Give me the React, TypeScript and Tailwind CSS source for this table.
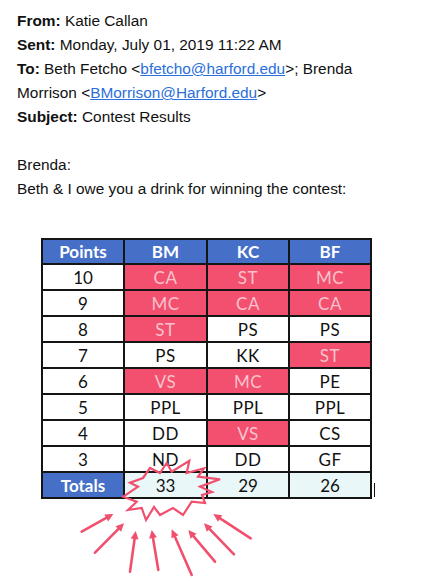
import React from 'react';

type Cell = { t: string; red?: boolean };

const rows: { pts: string; cells: Cell[] }[] = [
  { pts: '10', cells: [{ t: 'CA', red: true }, { t: 'ST', red: true }, { t: 'MC', red: true }] },
  { pts: '9', cells: [{ t: 'MC', red: true }, { t: 'CA', red: true }, { t: 'CA', red: true }] },
  { pts: '8', cells: [{ t: 'ST', red: true }, { t: 'PS' }, { t: 'PS' }] },
  { pts: '7', cells: [{ t: 'PS' }, { t: 'KK' }, { t: 'ST', red: true }] },
  { pts: '6', cells: [{ t: 'VS', red: true }, { t: 'MC', red: true }, { t: 'PE' }] },
  { pts: '5', cells: [{ t: 'PPL' }, { t: 'PPL' }, { t: 'PPL' }] },
  { pts: '4', cells: [{ t: 'DD' }, { t: 'VS', red: true }, { t: 'CS' }] },
  { pts: '3', cells: [{ t: 'ND' }, { t: 'DD' }, { t: 'GF' }] },
];

const arrows = [
  [81.7, 531.7, 113.3, 514],
  [95, 552.7, 124, 523.3],
  [130, 571.7, 135.7, 531],
  [158.3, 570, 151.7, 530],
  [191.7, 575, 171.7, 529.3],
  [215, 561.7, 188.3, 530],
  [234, 554.3, 204, 523.3],
  [250.7, 538.3, 213.3, 514],
];

const star =
  '123.3,496.7 138,486.7 130,482.7 143,478 150,468 160,473 166.7,463 171.7,471.7 189.3,460.7 186.7,473 204,468.3 198,476.7 220,479.3 200,486.7 212,492 202,495 205,503 191.7,501.7 183,515 173,508 160,515 154,507 146,520 141.7,508 128,510 136.7,501.7';

function Arrow({ a }: { a: number[] }) {
  const [x1, y1, x2, y2] = a;
  const ang = Math.atan2(y2 - y1, x2 - x1);
  const len = 9;
  const spread = 0.45;
  const p1 = [x2 - len * Math.cos(ang - spread), y2 - len * Math.sin(ang - spread)];
  const p2 = [x2 - len * Math.cos(ang + spread), y2 - len * Math.sin(ang + spread)];
  return (
    <g>
      <line x1={x1} y1={y1} x2={x2 - 4 * Math.cos(ang)} y2={y2 - 4 * Math.sin(ang)} stroke="#f0506e" strokeWidth="2.6" strokeLinecap="round" />
      <polygon points={`${x2},${y2} ${p1[0]},${p1[1]} ${p2[0]},${p2[1]}`} fill="#f0506e" />
    </g>
  );
}

export default function App() {
  const cellBase = 'flex items-center justify-center h-[24px] text-[17px] leading-none';

  return (
    <div className="relative w-[441px] h-[581px] bg-white overflow-hidden text-[#111]">
      {/* Email header */}
      <div className="pt-[9px] pl-[17px] text-[15.4px] leading-[24px] font-['Liberation_Sans',Arial,sans-serif]">
        <div><b>From:</b> Katie Callan</div>
        <div><b>Sent:</b> Monday, July 01, 2019 11:22 AM</div>
        <div>
          <b>To:</b> Beth Fetcho &lt;<span className="text-[#2a6fdb] underline">bfetcho@harford.edu</span>&gt;; Brenda
        </div>
        <div>
          Morrison &lt;<span className="text-[#2a6fdb] underline">BMorrison@Harford.edu</span>&gt;
        </div>
        <div><b>Subject:</b> Contest Results</div>
        <div className="h-[24px]" />
        <div>Brenda:</div>
        <div>Beth &amp; I owe you a drink for winning the contest:</div>
      </div>

      {/* Results table */}
      <div className="mt-[37px] ml-[41px] w-[331px] grid grid-cols-[80px_81px_80px_80px] gap-[2px] p-[2px] bg-[#151515] font-['Lato','Open_Sans',sans-serif]">
        {['Points', 'BM', 'KC', 'BF'].map((h) => (
          <div key={h} className="flex items-center justify-center h-[23px] bg-[#4670c8] text-white font-bold text-[17px] leading-none">
            {h}
          </div>
        ))}
        {rows.map((r) => (
          <React.Fragment key={r.pts}>
            <div className={`${cellBase} bg-white`}>{r.pts}</div>
            {r.cells.map((c, i) => (
              <div
                key={i}
                className={`${cellBase} ${c.red ? 'bg-[#f2506e] text-[#f9c2cd]' : 'bg-white text-[#111]'} tracking-[0.5px]`}
              >
                {c.t}
              </div>
            ))}
          </React.Fragment>
        ))}
        <div className="flex items-center justify-center h-[24px] bg-[#4670c8] text-white font-bold text-[17px] leading-none">
          Totals
        </div>
        {['33', '29', '26'].map((t) => (
          <div key={t} className={`${cellBase} bg-[#eaf7f9]`}>{t}</div>
        ))}
      </div>

      {/* Annotation overlay */}
      <svg className="absolute left-0 top-0" width="441" height="581" viewBox="0 0 441 581">
        <line x1="374.5" y1="483" x2="374.5" y2="497" stroke="#111" strokeWidth="1" />
        <polygon points={star} fill="none" stroke="#f0506e" strokeWidth="2.2" strokeLinejoin="miter" />
        {arrows.map((a, i) => (
          <Arrow key={i} a={a} />
        ))}
      </svg>
    </div>
  );
}
